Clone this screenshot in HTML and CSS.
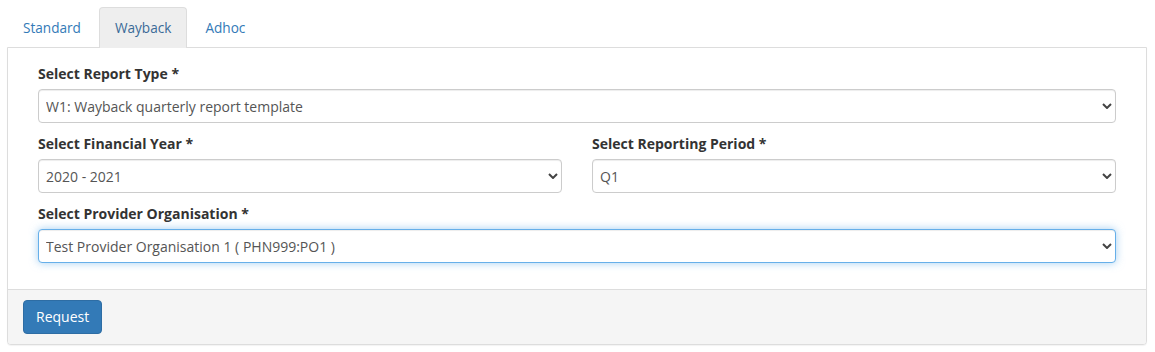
FILE: index.html
```html
<!DOCTYPE html>
<html lang="en">
<head>
    <meta charset="UTF-8">
    <meta name="viewport" content="width=device-width, initial-scale=1.0">
    <title>Wayback Report</title>
    <link rel="stylesheet" href="styles.css">
</head>
<body>

    <div class="report">
        <ul class="report-tabs">
            <li><a href="#">Standard</a></li>
            <li class="active"><a href="#">Wayback</a></li>
            <li><a href="#">Adhoc</a></li>
        </ul>

        <div class="report-panel">
            <div class="report-body">
                <div class="form-group">
                    <label>Select Report Type *</label>
                    <div class="select-wrap">
                        <select><option>W1: Wayback quarterly report template</option></select>
                        <svg class="chevron" viewBox="0 0 10 6"><path d="M1 1 L5 5 L9 1"/></svg>
                    </div>
                </div>

                <div class="form-row">
                    <div class="form-group">
                        <label>Select Financial Year *</label>
                        <div class="select-wrap">
                            <select><option>2020 - 2021</option></select>
                            <svg class="chevron" viewBox="0 0 10 6"><path d="M1 1 L5 5 L9 1"/></svg>
                        </div>
                    </div>
                    <div class="form-group">
                        <label>Select Reporting Period *</label>
                        <div class="select-wrap">
                            <select><option>Q1</option></select>
                            <svg class="chevron" viewBox="0 0 10 6"><path d="M1 1 L5 5 L9 1"/></svg>
                        </div>
                    </div>
                </div>

                <div class="form-group">
                    <label>Select Provider Organisation *</label>
                    <div class="select-wrap">
                        <select class="focused"><option>Test Provider Organisation 1 ( PHN999:PO1 )</option></select>
                        <svg class="chevron" viewBox="0 0 10 6"><path d="M1 1 L5 5 L9 1"/></svg>
                    </div>
                </div>
            </div>
            <div class="report-footer">
                <button class="btn-request">Request</button>
            </div>
        </div>
    </div>

</body>
</html>
```

FILE: styles.css
```css
body {
    font-family: "Open Sans", "Liberation Sans", sans-serif;
    font-size: 14px;
    line-height: 20px;
    color: #333;
    margin: 0;
    padding: 7px 8px 7px 7px;
    background-color: #ffffff;
}
.report-tabs {
    list-style: none;
    margin: 0;
    padding: 0;
    display: flex;
}
.report-tabs li {
    margin-right: 2px;
    margin-bottom: -1px;
}
.report-tabs a {
    display: block;
    padding: 10px 15px 10px 15px;
    font-size: 13.6px;
    color: #337ab7;
    text-decoration: none;
    border: 1px solid transparent;
    border-bottom: none;
    border-radius: 4px 4px 0 0;
}
.report-tabs .active a {
    background-color: #eeeeee;
    border-color: #dddddd;
    color: #3a6a97;
    padding-bottom: 10px;
}
.report-panel {
    border: 1px solid #dddddd;
    border-radius: 0 0 4px 4px;
    box-shadow: 0 1px 1px rgba(0, 0, 0, 0.05);
    background-color: #ffffff;
}
.report-body {
    padding: 16px 30px 15px 30px;
}
.form-row {
    display: grid;
    grid-template-columns: 1fr 1fr;
    column-gap: 30px;
}
.form-group {
    margin-bottom: 11px;
}
.form-group label {
    display: block;
    font-weight: 700;
    margin-bottom: 5px;
}
.select-wrap {
    position: relative;
}
.select-wrap select {
    appearance: none;
    -webkit-appearance: none;
    display: block;
    width: 100%;
    height: 34px;
    padding: 6px 7px;
    font-family: inherit;
    font-size: 14px;
    color: #555555;
    background-color: #ffffff;
    border: 1px solid #cccccc;
    border-radius: 4px;
    box-shadow: inset 0 1px 1px rgba(0, 0, 0, 0.075);
    outline: none;
}
.select-wrap select.focused {
    border-color: #66afe9;
    box-shadow: inset 0 1px 1px rgba(0, 0, 0, 0.075), 0 0 8px rgba(102, 175, 233, 0.6);
}
.chevron {
    position: absolute;
    right: 4px;
    top: 14px;
    width: 10px;
    height: 6px;
    fill: none;
    stroke: #444444;
    stroke-width: 2;
    pointer-events: none;
}
.report-footer {
    background-color: #f5f5f5;
    border-top: 1px solid #dddddd;
    padding: 10px 15px;
    border-radius: 0 0 3px 3px;
}
.btn-request {
    font-family: inherit;
    font-size: 14px;
    line-height: 20px;
    padding: 6px 12px;
    color: #ffffff;
    background-color: #337ab7;
    border: 1px solid #2e6da4;
    border-radius: 4px;
    cursor: pointer;
}
```
